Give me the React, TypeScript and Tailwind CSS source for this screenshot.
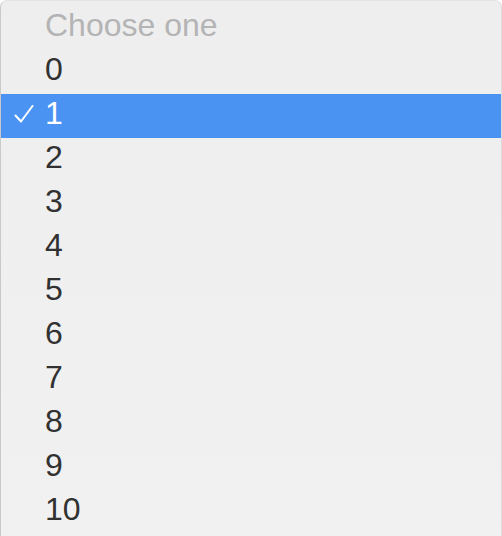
const options = [0, 1, 2, 3, 4, 5, 6, 7, 8, 9, 10];

type RowProps = {
  label: string;
  selected?: boolean;
  placeholder?: boolean;
};

const Row = ({ label, selected, placeholder }: RowProps) => {
  const color = selected
    ? "bg-[#4a93f2] text-white"
    : placeholder
      ? "text-[#b4b4b5]"
      : "text-[#313131]";
  return (
    <div className={`relative h-[44px] pl-[44px] pb-[5px] leading-[39px] ${color}`}>
      {selected && (
        <svg
          className="absolute left-[13px] top-[11px]"
          width="20"
          height="18"
          viewBox="0 0 20 18"
          fill="none">
          <path
            d="M1.5 10.5 L7 16.5 L18.5 1"
            stroke="white"
            strokeWidth="2"
            strokeLinecap="round"
            strokeLinejoin="round"
          />
        </svg>
      )}
      {label}
    </div>
  );
};

export default function App() {
  return (
    <div className="h-[536px] w-[502px] overflow-hidden bg-white">
      <div
        className="h-[560px] rounded-t-[7px] border border-b-0 border-l-[#c9c9ca] border-r-[#dcdcdd] border-t-[#e4e4e5] bg-gradient-to-b from-[#eeeeef] to-[#f1f1f1] pt-[5px] text-[32px]"
        style={{ fontFamily: '"Liberation Sans", Arial, sans-serif' }}>
        <Row label="Choose one" placeholder />
        {options.map((opt) => (
          <Row key={opt} label={String(opt)} selected={opt === 1} />
        ))}
      </div>
    </div>
  );
}
